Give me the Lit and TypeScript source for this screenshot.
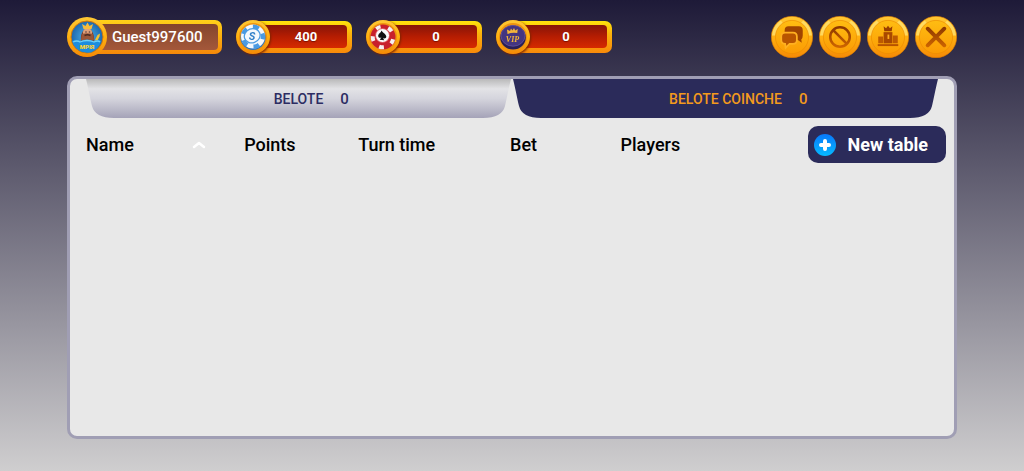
import { LitElement, html, svg, css } from "lit";
import { customElement, property, state } from "lit/decorators.js";
import { classMap } from "lit/directives/class-map.js";

const goldDefs = svg`
  <defs>
    <linearGradient id="rim" x1="0" y1="0" x2="0" y2="1">
      <stop offset="0" stop-color="#ffc834"></stop>
      <stop offset=".5" stop-color="#ffb010"></stop>
      <stop offset="1" stop-color="#f58a06"></stop>
    </linearGradient>
    <linearGradient id="face" x1="0" y1="0" x2="0" y2="1">
      <stop offset="0" stop-color="#ffbd12"></stop>
      <stop offset="1" stop-color="#fb9b04"></stop>
    </linearGradient>
    <linearGradient id="ink" x1="0" y1="0" x2="0" y2="43" gradientUnits="userSpaceOnUse">
      <stop offset=".25" stop-color="#8a3600"></stop>
      <stop offset=".75" stop-color="#cf6600"></stop>
    </linearGradient>
  </defs>`;

const glyphs = {
  chat: svg`
    <path d="M18 10.500h10.500q4 0 4 4v5.500q0 3-1.500 4l.5 3.500-4-3h-9.500q-4 0-4-4v-6q0-4 4-4z" fill="#a04400"></path>
    <path d="M14.500 17h8q4 0 4 4v3.500q0 4-4 4h-3.500l-4 4-.5-4q-4 0-4-4v-3.500q0-4 4-4z" fill="#b95500" stroke="#ffb020" stroke-width="1.800"></path>`,
  block: svg`
    <circle cx="21.500" cy="21.500" r="10" fill="none" stroke="url(#ink)" stroke-width="2.600"></circle>
    <path d="M14.500 14.500l14 14" stroke="url(#ink)" stroke-width="2.600"></path>`,
  podium: svg`
    <path d="M17 10.500l2.500 2 2-2.500 2 2.500 2.500-2-.7 5h-7.600z" fill="#9a3e00"></path>
    <path d="M17 16.500h9v11.500h-9z" fill="#a84800"></path>
    <path d="M11.500 21h5v7h-5zM26.500 20h5v8h-5z" fill="#bd5a00"></path>
    <path d="M21 19h1.800v4.500H21z" fill="#ffad1e"></path>
    <path d="M11 29.800h21" stroke="#b65200" stroke-width="2"></path>`,
  close: svg`
    <path d="M13 13l17 17M30 13l-17 17" stroke="url(#ink)" stroke-width="4" stroke-linecap="round"></path>`,
};

const tokens = {
  dollar: svg`
    <circle cx="17" cy="17.500" r="12.500" fill="#2f74bd"></circle>
    <circle cx="17" cy="16.500" r="12" fill="#f4f8fc"></circle>
    <circle cx="17" cy="16.800" r="10" fill="none" stroke="#4a9ae2" stroke-width="4.400" stroke-dasharray="6 6.566" transform="rotate(-20 17 17)"></circle>
    <ellipse cx="16.200" cy="15.800" rx="8" ry="7" fill="#f4f8fc" stroke="#4c9be0" stroke-width="1.300" transform="rotate(-20 16.200 15.800)"></ellipse>
    <text x="16" y="19.800" text-anchor="middle" font-family="Roboto, sans-serif" font-size="11" font-weight="700" font-style="italic" fill="#2f7fc8">S</text>`,
  spade: svg`
    <circle cx="17" cy="17" r="12.500" fill="#c8202c"></circle>
    <circle cx="17" cy="17" r="10.300" fill="none" stroke="#f7f1f1" stroke-width="4" stroke-dasharray="4.800 8.140" transform="rotate(-60 17 17)"></circle>
    <circle cx="16.500" cy="15.500" r="7" fill="#fbfbfb" stroke="#d84048" stroke-width=".8"></circle>
    <path d="M15.500 10.500c1.600 2.700 4.600 3.600 4.800 6 .1 2-2.200 2.600-3.300 1.300l1.200 2.400-4.500-.4 1.700-2.400c-1.600 1-3.500-.2-3.200-2 .4-2.200 2.900-2.600 3.300-4.900z" fill="#111"></path>`,
  vip: svg`
    <ellipse cx="17" cy="17.500" rx="12.800" ry="12" fill="#2a1f55"></ellipse>
    <ellipse cx="17" cy="15.800" rx="12" ry="10.400" fill="#443580" stroke="#6353a0" stroke-width=".8"></ellipse>
    <path d="M11.500 14l-.5-4.500 3 1.500 1-2.500 1.500 2 1.500-2.500 1.200 2.500 2.500-1.500-.4 4q-5-1-9.800 1z" fill="#f4b53a"></path>
    <text x="16.500" y="21.500" text-anchor="middle" font-family="Liberation Serif, serif" font-size="8" font-weight="700" font-style="italic" fill="#f4b53a">VIP</text>`,
};

@customElement("coin-balance")
class CoinBalance extends LitElement {
  @property() token: keyof typeof tokens = "dollar";
  @property() label = "";
  @property({ type: Number }) amount = 0;

  static styles = css`
    :host { display: block; }
    .balance { display: flex; align-items: center; }
    .token { display: block; width: 34px; height: 34px; z-index: 1; filter: drop-shadow(1px 1px 1px #7a2400); }
    .frame {
      box-sizing: border-box; width: 100px; height: 32px; padding: 4px 5px 5px 0; margin-left: -18px;
      border-radius: 7px; background: linear-gradient(#ffe30c, #fbb20c 40%, #f88a0a);
    }
    .amount {
      display: block; height: 23px; padding-left: 12px; border-radius: 4px; text-align: center;
      font-size: 13px; line-height: 23px; font-weight: 700; color: #fff;
      background: linear-gradient(#861408, #b51d02 50%, #d62a00);
      text-shadow: 0 1px 1px #7a1000;
    }
  `;

  render() {
    return html`
      <div class="balance" title=${this.label}>
        <svg class="token" viewBox="0 0 34 34" aria-hidden="true">
          ${goldDefs}
          <circle cx="17" cy="17" r="17" fill="url(#rim)"></circle>
          <circle cx="17" cy="17" r="14" fill="#ee9310"></circle>
          ${tokens[this.token]}
        </svg>
        <div class="frame"><span class="amount">${this.amount}</span></div>
      </div>`;
  }
}

@customElement("round-button")
class RoundButton extends LitElement {
  @property() glyph: keyof typeof glyphs = "chat";
  @property() label = "";

  static styles = css`
    :host { display: block; }
    .round { display: block; padding: 0; border: 0; border-radius: 50%; background: none; cursor: pointer; }
    .art { display: block; width: 42px; height: 42px; }
  `;

  render() {
    return html`
      <button class="round" type="button" aria-label=${this.label}>
        <svg class="art" viewBox="0 0 43 43" aria-hidden="true">
          ${goldDefs}
          <circle cx="21.500" cy="21.500" r="21.200" fill="url(#rim)" stroke="#d97800" stroke-width=".6"></circle>
          <path d="M1 20A20.500 20.500 0 0 1 10 4.500L14 9.500A15 15 0 0 0 6 20z" fill="#ffe476" opacity=".75"></path>
          <path d="M33 4.500A20.500 20.500 0 0 1 42 20H37A15 15 0 0 0 29 9z" fill="#ffe476" opacity=".75"></path>
          <circle cx="21.500" cy="21.500" r="17" fill="url(#face)" stroke="#ee8d00" stroke-width=".7"></circle>
          ${glyphs[this.glyph]}
        </svg>
      </button>`;
  }
}

@customElement("app-root")
class AppRoot extends LitElement {
  @state() private active = "coinche";

  private tabs = [
    { id: "belote", name: "BELOTE", count: 0 },
    { id: "coinche", name: "BELOTE COINCHE", count: 0 },
  ];

  static styles = css`
    :host {
      display: flex; flex-direction: column; box-sizing: border-box; min-height: 100vh;
      padding: 16px 67px 32px; font-family: Roboto, sans-serif;
      background: linear-gradient(#1e1a38, #cfcecf);
    }
    .bar { display: flex; align-items: center; justify-content: space-between; margin-bottom: 18px; }
    .wallet { display: flex; align-items: center; gap: 14px; }
    .actions { display: flex; gap: 6px; }

    .profile { display: flex; align-items: center; padding: 0; border: 0; background: none; font: inherit; cursor: pointer; }
    .avatar { display: block; width: 40px; height: 40px; z-index: 1; }
    .plate {
      box-sizing: border-box; height: 34px; padding: 4px; margin-left: -20px; border-radius: 7px;
      background: linear-gradient(#ffd21a, #fbae0e 50%, #f4880a);
    }
    .nick {
      display: block; height: 26px; padding: 0 16px 0 21px; border-radius: 4px;
      font-size: 15px; line-height: 26px; font-weight: 500; color: #fff;
      background: linear-gradient(#84452c, #a4583a);
    }

    .panel {
      flex: 1; box-sizing: border-box; border: 3px solid #a09eb4; border-radius: 10px;
      background: #e8e8e8;
    }
    .tabs { display: flex; padding: 0 15px; }
    .tab {
      flex: 1; display: grid; grid-template-columns: 1fr auto 1fr; align-items: center; column-gap: 17px;
      height: 39px; padding: 0; border: 0; background: none; cursor: pointer;
      font: 500 14px/20px Roboto, sans-serif; color: #2c2c62;
    }
    .tab.active { color: #f39a1d; }
    .shape { grid-area: 1 / 1 / 2 / 4; width: 100%; height: 39px; display: block; }
    .caption { grid-area: 1 / 2; }
    .count { grid-area: 1 / 3; justify-self: start; font-size: 15px; }

    .listing { display: flex; justify-content: space-between; align-items: center; padding: 8px 8px 0 16px; }
    .tables { width: 73%; table-layout: fixed; border-collapse: collapse; }
    .head { padding: 0; width: 20%; font-size: 18px; line-height: 24px; font-weight: 500; color: #000; text-align: center; }
    .head.name { width: 19%; }
    .sort {
      display: flex; width: 100%; align-items: center; justify-content: space-between;
      padding: 0; border: 0; background: none; font: inherit; color: inherit; cursor: pointer;
    }
    .caret { width: 14px; height: 8px; }
    .create {
      display: flex; align-items: center; gap: 12px; height: 37px; padding: 0 18px 0 6px;
      border: 0; border-radius: 10px; background: #2b2b5a; color: #fff; cursor: pointer;
      font: 700 18px/24px Roboto, sans-serif; white-space: nowrap;
    }
    .plus { width: 22px; height: 22px; }
  `;

  private renderAvatar() {
    return svg`
      <svg class="avatar" viewBox="0 0 40 40" aria-hidden="true">
        ${goldDefs}
        <radialGradient id="sea"><stop offset="0" stop-color="#4fb4e8"></stop><stop offset="1" stop-color="#1c66ae"></stop></radialGradient>
        <circle cx="20" cy="20" r="20" fill="url(#rim)"></circle>
        <circle cx="20" cy="20" r="16" fill="url(#sea)" stroke="#d77a08"></circle>
        <path d="M14 26q-1-10 3-13h7q4 4 3 13z" fill="#7a4030"></path>
        <ellipse cx="20.500" cy="15.500" rx="4.600" ry="4.200" fill="#e0a078"></ellipse>
        <path d="M15 17q5-1.500 11 0l1 6q-6 4-13 0z" fill="#9a5638"></path>
        <path d="M17.500 18.500q3-1.500 6 0" fill="none" stroke="#4a2a20" stroke-width="1.400"></path>
        <path d="M18.300 15h1.400M21.800 15h1.400" stroke="#2a2030" stroke-width="1.200"></path>
        <path d="M16.500 12l-1.500-5 3.500 2 2-3.500 2 3.500 3.500-2-1.500 5z" fill="#f6bb3c"></path>
        <path d="M27 25l3.500-7 2.500-1.500-.5 3-3 6z" fill="#f5c234"></path>
        <path d="M5 24q4-3 8 0 7-3 14 0 4-2 7 0-2 8-10 11.500-10 1-15-4.500-3-3-4-7z" fill="#1c8ddd"></path>
        <path d="M6 25q4-2 7 0 7-3 14 0 4-2 6 0" fill="none" stroke="#6fd0f6" stroke-width="1.300"></path>
        <text x="20" y="32" text-anchor="middle" font-family="Roboto, sans-serif" font-size="6" font-weight="900" fill="#ffd22c">МРІЯ</text>
      </svg>`;
  }

  private renderTab(tab: { id: string; name: string; count: number }) {
    const on = tab.id === this.active;
    return html`
      <button class=${classMap({ tab: true, active: on })} type="button" role="tab"
        aria-selected=${on ? "true" : "false"} @click=${() => (this.active = tab.id)}>
        <svg class="shape" viewBox="0 0 427 39" preserveAspectRatio="none" aria-hidden="true">
          <defs>
            <linearGradient id="silver" x1="0" y1="0" x2="0" y2="1">
              <stop offset="0" stop-color="#b9b9b9"></stop>
              <stop offset=".25" stop-color="#e3e3e6"></stop>
              <stop offset=".5" stop-color="#d5d5dd"></stop>
              <stop offset="1" stop-color="#a5a3b8"></stop>
            </linearGradient>
          </defs>
          <path d="M1 0H426C423 12 422 19 420 27Q417 39 398 39H29Q10 39 7 27C5 19 4 12 1 0z"
            fill=${on ? "#2b2b5a" : "url(#silver)"}></path>
        </svg>
        <span class="caption">${tab.name}</span>
        <span class="count">${tab.count}</span>
      </button>`;
  }

  render() {
    return html`
      <header class="bar">
        <div class="wallet">
          <button class="profile" type="button">
            ${this.renderAvatar()}
            <span class="plate"><span class="nick">Guest997600</span></span>
          </button>
          <coin-balance token="dollar" label="Chips" .amount=${400}></coin-balance>
          <coin-balance token="spade" label="Points" .amount=${0}></coin-balance>
          <coin-balance token="vip" label="VIP" .amount=${0}></coin-balance>
        </div>
        <nav class="actions">
          <round-button glyph="chat" label="Chat"></round-button>
          <round-button glyph="block" label="Blocked players"></round-button>
          <round-button glyph="podium" label="Ranking"></round-button>
          <round-button glyph="close" label="Close"></round-button>
        </nav>
      </header>
      <main class="panel">
        <div class="tabs" role="tablist">${this.tabs.map((tab) => this.renderTab(tab))}</div>
        <div class="listing">
          <table class="tables">
            <thead>
              <tr>
                <th class="head name" scope="col" aria-sort="ascending">
                  <button class="sort" type="button">
                    Name
                    <svg class="caret" viewBox="0 0 14 8" aria-hidden="true">
                      <path d="M2 6l5-4 5 4" fill="none" stroke="#fff" stroke-width="2.500" stroke-linecap="round" stroke-linejoin="round"></path>
                    </svg>
                  </button>
                </th>
                <th class="head" scope="col">Points</th>
                <th class="head" scope="col">Turn time</th>
                <th class="head" scope="col">Bet</th>
                <th class="head" scope="col">Players</th>
              </tr>
            </thead>
            <tbody></tbody>
          </table>
          <button class="create" type="button">
            <svg class="plus" viewBox="0 0 22 22" aria-hidden="true">
              <linearGradient id="sky" x1="0" y1="0" x2="0" y2="1">
                <stop offset="0" stop-color="#0878fa"></stop><stop offset="1" stop-color="#06baff"></stop>
              </linearGradient>
              <circle cx="11" cy="11" r="11" fill="url(#sky)"></circle>
              <path d="M11 7v8M7 11h8" stroke="#fff" stroke-width="4" stroke-linecap="round"></path>
            </svg>
            New table
          </button>
        </div>
      </main>`;
  }
}
